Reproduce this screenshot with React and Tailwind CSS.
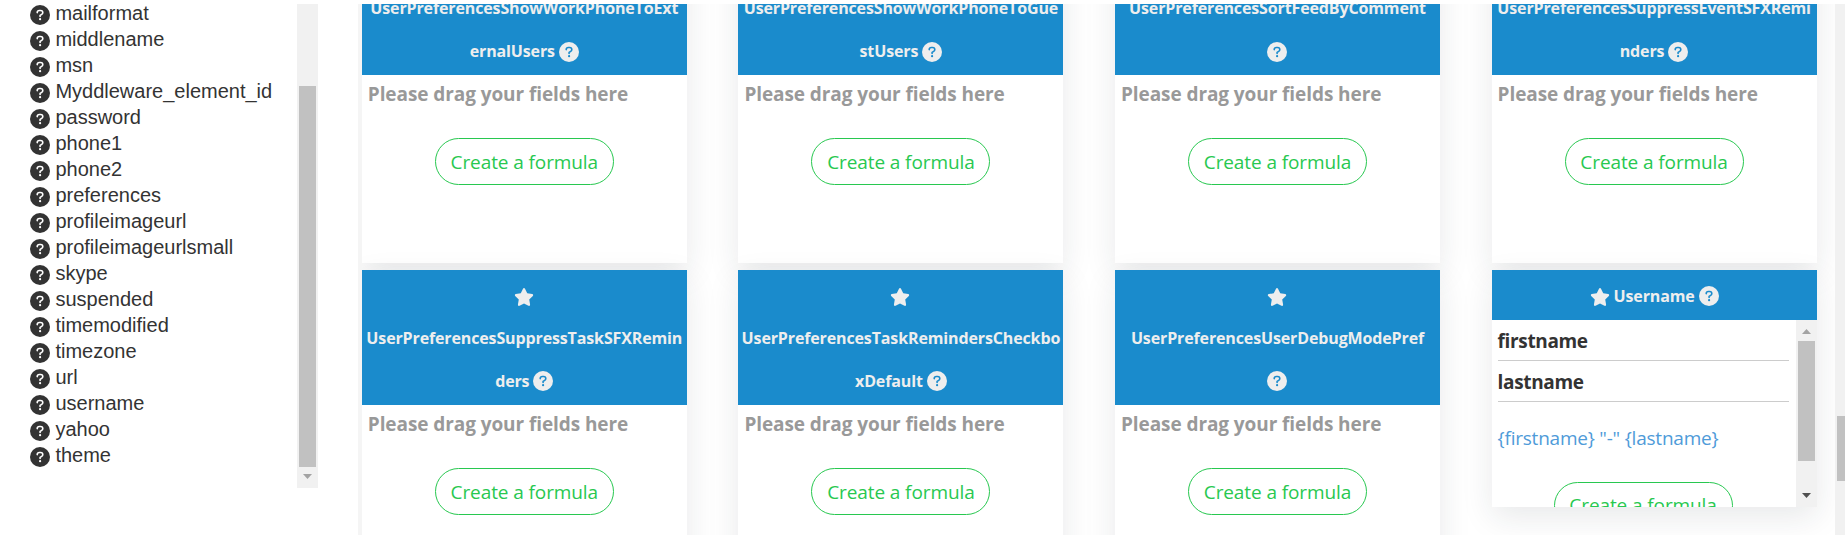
import { FaStar } from "react-icons/fa6";

const FIELDS = [
  "mailformat", "middlename", "msn", "Myddleware_element_id", "password", "phone1",
  "phone2", "preferences", "profileimageurl", "profileimageurlsmall", "skype",
  "suspended", "timemodified", "timezone", "url", "username", "yahoo", "theme",
];

const TOP = [
  ["UserPreferencesShowWorkPhoneToExt", "ernalUsers"],
  ["UserPreferencesShowWorkPhoneToGue", "stUsers"],
  ["UserPreferencesSortFeedByComment", ""],
  ["UserPreferencesSuppressEventSFXRemi", "nders"],
];

const BOTTOM = [
  ["UserPreferencesSuppressTaskSFXRemin", "ders"],
  ["UserPreferencesTaskRemindersCheckbo", "xDefault"],
  ["UserPreferencesUserDebugModePref", ""],
];

function Arrow({ up, className }) {
  return (
    <svg viewBox="0 0 9 5" className={`h-[5px] w-[9px] ${className}`} fill="currentColor">
      <path d={up ? "M0 5 4.5 0 9 5z" : "M0 0h9L4.5 5z"} />
    </svg>
  );
}

function HelpIcon({ className }) {
  return (
    <svg viewBox="0 0 20 20" className={`size-5 shrink-0 ${className}`}>
      <circle cx="10" cy="10" r="10" fill="currentColor" />
      <path
        d="M7.2 7.6C7.3 6.2 8.2 5.5 9.3 5.5H10.6C11.9 5.5 12.8 6.4 12.8 7.6C12.8 8.4 12.4 9 11.7 9.4L10.1 10.4V11.5"
        fill="none"
        strokeWidth="1.6"
        strokeLinecap="round"
        strokeLinejoin="round"
        className="stroke-(--mark)"
      />
      <circle cx="10.1" cy="14.2" r="1.1" className="fill-(--mark)" />
    </svg>
  );
}

function TitleLine({ children }) {
  return (
    <div className="flex h-[42.67px] items-center justify-center gap-1 whitespace-nowrap">
      {children}
    </div>
  );
}

function Card({ children }) {
  return (
    <div className="flex w-[325px] flex-col bg-white shadow-[0_10px_30px_rgba(30,40,50,0.1)]">
      {children}
    </div>
  );
}

function Header({ children }) {
  return (
    <div className="bg-[#1a8bcc] pt-[4.4px] pb-[2.6px] text-[16px] font-bold tracking-[-0.13px] text-[#eee] [--mark:#1a8bcc]">
      {children}
    </div>
  );
}

function FormulaButton() {
  return (
    <button className="h-[47px] w-[179px] shrink-0 rounded-full border border-[#28c850] pt-px text-[19px] tracking-[-0.1px] whitespace-nowrap text-[#28c850]">
      Create a formula
    </button>
  );
}

function FieldCard({ lines }) {
  return (
    <Card>
      <Header>
        <TitleLine><FaStar className="mt-0.5 mr-px size-5" /></TitleLine>
        <TitleLine>{lines[0]}</TitleLine>
        <TitleLine>
          {lines[1] && <span>{lines[1]}</span>}
          <HelpIcon className="mt-px" />
        </TitleLine>
      </Header>
      <div className="flex h-[188px] flex-col items-center">
        <p className="h-[63px] w-full pt-[5px] pl-1.5 text-[19px] leading-7 font-bold tracking-[-0.08px] text-[#999]">
          Please drag your fields here
        </p>
        <FormulaButton />
      </div>
    </Card>
  );
}

function UsernameCard() {
  return (
    <Card>
      <Header>
        <TitleLine>
          <FaStar className="mt-0.5 size-5" />
          <span>Username</span>
          <HelpIcon className="mt-px" />
        </TitleLine>
      </Header>
      <div className="flex h-[187px] overflow-hidden">
        <div className="flex w-[304px] flex-col items-center pr-[21px] pl-1.5">
          <p className="h-[41px] w-[291px] shrink-0 self-start border-b border-[#ccc] pt-[7px] text-[19px] leading-7 font-bold tracking-[-0.35px] text-[#333]">firstname</p>
          <p className="h-[41px] w-[291px] shrink-0 self-start border-b border-[#ccc] pt-[7px] text-[19px] leading-7 font-bold tracking-[-0.35px] text-[#333]">lastname</p>
          <p className="h-20 w-full shrink-0 pt-[22px] text-[19px] leading-7 tracking-[-0.22px] whitespace-nowrap text-[#4f9bd9]">{'{firstname} "-" {lastname}'}</p>
          <div className="flex w-[291px] shrink-0 justify-center self-start"><FormulaButton /></div>
        </div>
        <div className="flex w-[21px] flex-col items-center bg-[#f1f1f1]">
          <Arrow up className="mt-[9px] shrink-0 text-[#a3a3a3]" />
          <div className="mt-[7px] h-[120px] w-[17px] shrink-0 bg-[#c1c1c1]" />
          <Arrow className="mt-8 shrink-0 text-[#505050]" />
        </div>
      </div>
    </Card>
  );
}

export default function App() {
  return (
    <div className="flex h-[535px] w-[1845px] overflow-hidden bg-white pt-1 font-['Open_Sans',sans-serif]">
      <aside className="flex h-[484px] w-[318px] shrink-0 justify-between">
        <ul className="pl-[30px] font-['Liberation_Sans',sans-serif] text-[20px] text-[#333] [--mark:#fff]">
          {FIELDS.map((f) => (
            <li key={f} className="flex h-[26px] items-start gap-[5.4px] leading-[18px]">
              <HelpIcon className="mt-px" />
              <span>{f}</span>
            </li>
          ))}
        </ul>
        <div className="flex w-[21px] flex-col items-center bg-[#f1f1f1]">
          <div className="mt-[82px] h-[381px] w-[17px] bg-[#c1c1c1]" />
          <Arrow className="mt-[7px] text-[#a3a3a3]" />
        </div>
      </aside>

      <main className="ml-[39.8px] h-[531px] w-[1477.2px] shrink-0 overflow-hidden border-l-4 border-[#f5f5f5]">
        <div className="-mt-16 grid grid-cols-[repeat(4,325px)] gap-x-[51.6px] gap-y-[7px]">
          {TOP.map((lines) => <FieldCard key={lines[0]} lines={lines} />)}
          {BOTTOM.map((lines) => <FieldCard key={lines[0]} lines={lines} />)}
          <div><UsernameCard /></div>
        </div>
      </main>

      <div className="flex w-2.5 shrink-0 justify-end bg-[#f1f1f1]">
        <div className="mt-[412px] h-[65px] w-2 bg-[#c1c1c1]" />
      </div>
    </div>
  );
}
